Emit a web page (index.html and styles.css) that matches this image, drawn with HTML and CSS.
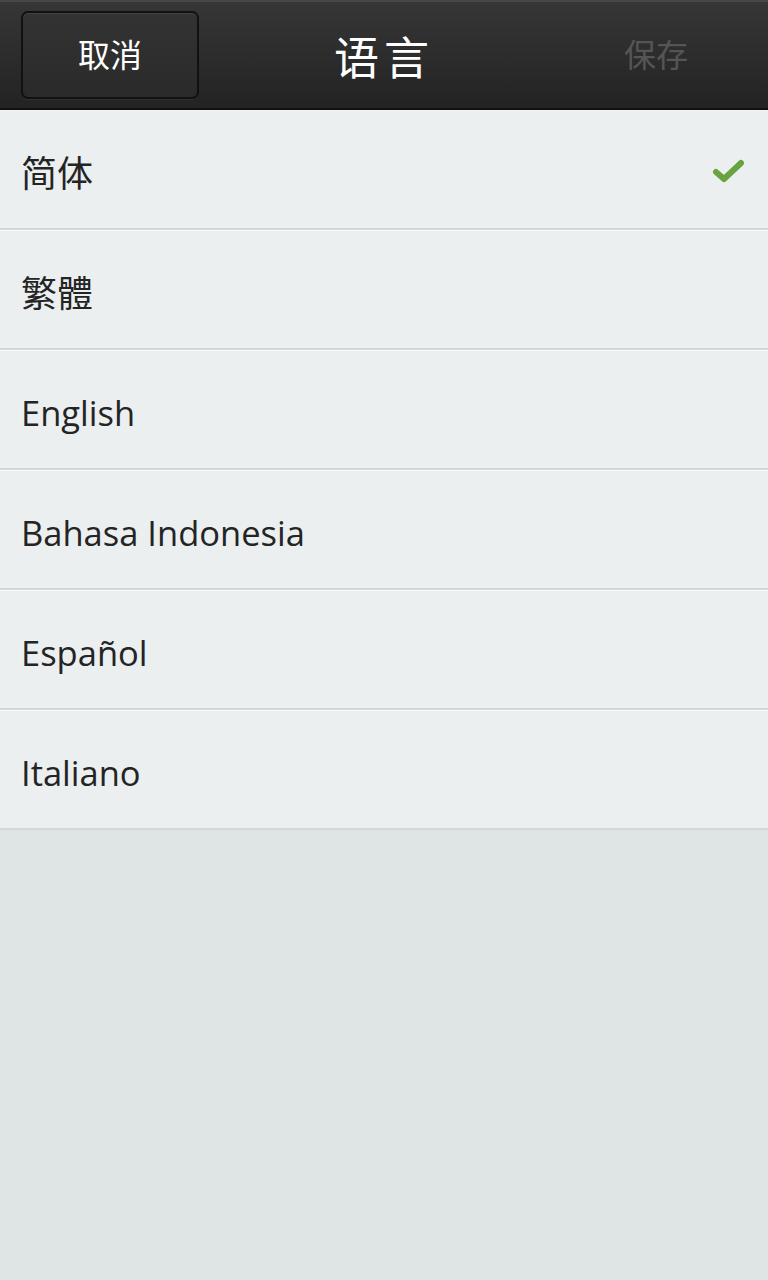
FILE: index.html
```html
<!DOCTYPE html>
<html lang="zh">
<head>
<meta charset="utf-8">
<title>语言</title>
<link rel="stylesheet" href="styles.css">
</head>
<body>
<header class="titlebar">
  <button class="btn-cancel">取消</button>
  <h1 class="title">语言</h1>
  <span class="btn-save">保存</span>
</header>
<ul class="list">
  <li class="row cjk">简体
    <svg class="check" viewBox="0 0 34 26" width="34" height="26"><path d="M4 14 L12 21 L29 5" fill="none" stroke="#68a33f" stroke-width="6" stroke-linecap="round" stroke-linejoin="round"/></svg>
  </li>
  <li class="row cjk">繁體</li>
  <li class="row">English</li>
  <li class="row">Bahasa Indonesia</li>
  <li class="row">Español</li>
  <li class="row">Italiano</li>
</ul>
</body>
</html>
```

FILE: styles.css
```css
html, body {
  margin: 0;
  padding: 0;
}
body {
  width: 768px;
  height: 1280px;
  background: #dfe5e5;
  font-family: "Open Sans", "Noto Sans CJK SC", sans-serif;
  overflow: hidden;
}
.titlebar {
  height: 110px;
  box-sizing: border-box;
  border-top: 2px solid #474747;
  border-bottom: 2px solid #111;
  background: linear-gradient(#363636, #232323);
  display: flex;
  align-items: center;
  position: relative;
}
.btn-cancel {
  margin-left: 21px;
  margin-top: -1px;
  width: 178px;
  height: 88px;
  box-sizing: border-box;
  border: 2px solid #111;
  border-radius: 7px;
  background: linear-gradient(#333, #2a2a2a);
  box-shadow: inset 0 1px 0 rgba(255,255,255,0.08), 0 1px 0 rgba(255,255,255,0.06);
  color: #fff;
  font-family: "Noto Sans CJK SC", sans-serif;
  font-size: 32px;
  padding: 0 0 4px 0;
}
.title {
  position: absolute;
  left: 0;
  right: 0;
  top: 50%;
  transform: translateY(-50%);
  margin: 0;
  text-align: center;
  color: #fff;
  font-family: "Noto Sans CJK SC", sans-serif;
  font-weight: 400;
  font-size: 45px;
  letter-spacing: 5px;
  pointer-events: none;
}
.btn-save {
  margin-left: auto;
  margin-right: 80px;
  margin-bottom: 4px;
  color: #555;
  font-family: "Noto Sans CJK SC", sans-serif;
  font-size: 32px;
}
.list {
  list-style: none;
  margin: 0;
  padding: 0;
}
.row {
  height: 120px;
  box-sizing: border-box;
  background: #ebeff0;
  border-bottom: 2px solid #d5d6d7;
  border-top: 1px solid #fbfcfc;
  display: flex;
  align-items: center;
  padding: 5px 22px 0 21px;
  font-size: 34.5px;
  color: #242424;
}
.row:first-child {
  border-top-color: #eef1f2;
}
.cjk {
  font-family: "Noto Sans CJK SC", sans-serif;
  font-size: 36px;
  padding-top: 3px;
}
.check {
  margin-left: auto;
}
```
